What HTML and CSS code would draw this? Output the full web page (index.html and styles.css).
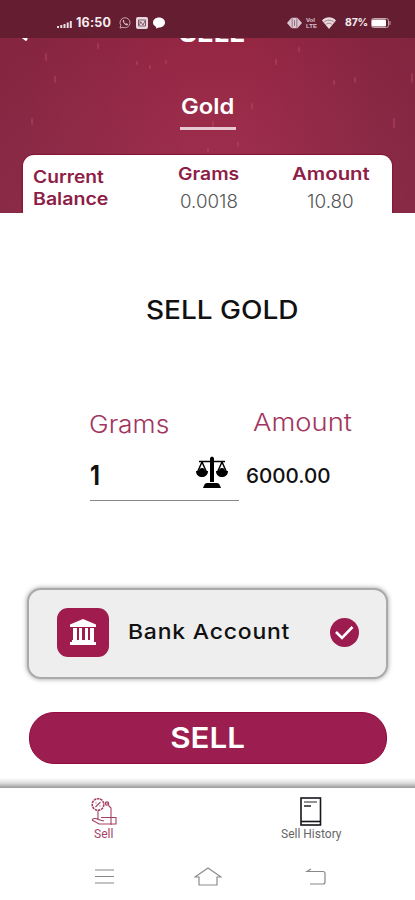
FILE: index.html
```html
<!DOCTYPE html>
<html lang="en">
<head>
<meta charset="utf-8">
<title>Sell Gold</title>
<link rel="stylesheet" href="styles.css">
</head>
<body>
<header class="hero">
  <svg class="sparkles" viewBox="0 0 415 213" aria-hidden="true">
    <g stroke="#d95b7e" stroke-width="2" stroke-linecap="round" opacity=".3">
      <path d="M46 54v6M55 77v5M98 44v4M137 62v2M150 66v2M166 61v2M299 48v3M276 60v4M334 81v3M355 78v4M252 104v4M238 143v3M208 149v2M213 122v4M394 119v8M412 74v8M32 119v5M98 5v5M46 15v5" fill="none"/>
    </g>
  </svg>
  <div class="status">
    <svg class="signal" viewBox="0 0 15 10"><path d="M1 7v2M4.3 6v3M7.500 5v4M10.700 3.500v5.500M13.800 2v7" stroke="#eadde2" stroke-width="2"/></svg>
    <span class="time">16:50</span>
    <svg class="call" viewBox="0 0 12 12"><path d="M1 11l.8-2.600A5 5 0 1 1 4 10.300z" fill="none" stroke="#c5a5b0"/><path d="M4 3c-1 2 2 5.500 4.500 5.500l.6-1.500-1.600-.8-.8.5L5 5.200l.4-.9L4.800 3z" fill="#d9c2ca"/></svg>
    <svg class="app" viewBox="0 0 12 12"><rect width="12" height="12" rx="2" fill="#e7d8de"/><path d="M2.500 3h7v6h-7zM3 8l2-3 2 3 2-4M3 5h2" stroke="#87586a" fill="none"/></svg>
    <svg class="bubble" viewBox="0 0 12 12"><path d="M6 .5c3.500 0 6 2.200 6 5s-2.500 5-6 5l-3 1 .2-1.600C1.200 9 0 7.500 0 5.500 0 2.700 2.500.5 6 .5z" fill="#fff"/></svg>
    <span class="grow"></span>
    <svg class="vibrate" viewBox="0 0 16 12"><path d="M0 6l3-3.500 2-2h6l2 2L16 6l-3 3.500-2 2H5l-2-2z" fill="#dbc7cf"/><path d="M5.500 1v10M10.500 1v10M8 3v6" stroke="#94687a"/></svg>
    <span class="volte"><span>VoI</span><span>LTE</span></span>
    <svg class="wifi" viewBox="0 0 14 12"><path d="M0 3.500C4-.7 10-.7 14 3.500L7 12z" fill="#e8dbe0"/><path d="M1.500 5.500c3-3 8-3 11 0M3.800 7.500c2-1.800 4.500-1.800 6.400 0" fill="none" stroke="#986878" stroke-width=".8"/></svg>
    <span class="percent">87%</span>
    <svg class="battery" viewBox="0 0 20 10"><rect x=".5" y=".5" width="17" height="9" rx="2" fill="none" stroke="#c4a4af"/><rect x="1" y="1.500" width="14" height="7" rx="1" fill="#fff"/><path d="M19 3v4" stroke="#c4a4af"/></svg>
  </div>
  <div class="titlebar">
    <svg class="back" viewBox="0 0 10 6"><path d="M1 0l4 3" stroke="#fff" stroke-width="3"/></svg>
    <div class="page-title">SELL</div>
  </div>
  <div class="tab"><span class="t-gold">Gold</span></div>
  <div class="balance">
    <div class="current"><div class="t-current">Current</div><div class="t-balance">Balance</div></div>
    <div class="stat grams"><div class="t-grams">Grams</div><div class="value v-grams">0.0018</div></div>
    <div class="stat amount"><div class="t-amount">Amount</div><div class="value v-amount">10.80</div></div>
  </div>
</header>
<main>
  <h1>SELL GOLD</h1>
  <div class="form">
    <div class="field">
      <div class="label l-grams">Grams</div>
      <div class="entry">
        <span class="one">1</span>
        <svg class="scales" viewBox="0 0 32 33"><path d="M14 2q2-3 4 0v24h-4zM8.500 28.500Q9 27 11 27h10q2 0 2.500 1.500L25 32H7z"/><path d="M3 5.500h26M6 6L1.500 16M6 6l4.500 10M26 6l-4.500 10M26 6l4.500 10" fill="none" stroke="#000" stroke-width="1.500"/><path d="M0 15h3q0-3 3-3t3 3h3c0 8-12 8-12 0zM20 15h3q0-3 3-3t3 3h3c0 8-12 8-12 0z"/></svg>
      </div>
    </div>
    <div class="field">
      <div class="label l-amount">Amount</div>
      <div class="total">6000.00</div>
    </div>
  </div>
  <section class="account">
    <div class="bank"><svg viewBox="0 0 26 26"><path d="M13 0L0 5.500V8h26V5.500zM3 9h4v12H3zM9 9h3v12H9zM15 9h3v12h-3zM20 9h4v12h-4zM2 21h22v2h2v3H0v-3h2z" fill="#fff"/></svg></div>
    <span class="account-name">Bank Account</span>
    <svg class="check" viewBox="0 0 29 29"><circle cx="14.500" cy="14.500" r="14.500" fill="#9d1c50"/><path d="M6 14l6 6L22.500 9" fill="none" stroke="#fff" stroke-width="2.600"/></svg>
  </section>
  <button class="sell"><span>SELL</span></button>
</main>
<nav class="tabs">
  <div class="item active">
    <svg viewBox="0 0 28 30"><g fill="none" stroke="#a64063" stroke-width="1.100"><circle cx="8" cy="7.500" r="5.800" stroke-width="1.600" stroke-dasharray="2.500 .7"/><path d="M5.500 10L10.500 5M6 5.500v1M10 8.500v1M8 13.500V22M15 6h3l1 3 2 2v17M2 22.500q3-2 6 0l6 1.500M2 23l7 4h17v-6.500H11"/><circle cx="17" cy="6.500" r="1.700"/></g></svg>
    <span>Sell</span>
  </div>
  <div class="item history">
    <svg viewBox="0 0 22 30"><rect x="1" y="1" width="19.500" height="27" fill="none" stroke="#16161b" stroke-width="1.600"/><path d="M1 24.500h20" stroke="#16161b" stroke-width="1.600"/><path d="M4 5h13" stroke="#777" stroke-width="1.600"/><path d="M4 9h7" stroke="#222" stroke-width="1.500"/></svg>
    <span>Sell History</span>
  </div>
</nav>
<footer class="system">
  <svg viewBox="0 0 28 20"><path d="M5 3h19M5 9.500h19M5 16h19" stroke="#888" stroke-width="1.200"/></svg>
  <svg viewBox="0 0 28 20"><path d="M1 10L14 1l13 9h-4v8H5v-8z" fill="none" stroke="#8b8b8b" stroke-width="1.200"/></svg>
  <svg viewBox="0 0 28 20"><path d="M13 2L9 4.500h16q2 0 2 2V15q0 2-2 2H12" fill="none" stroke="#888" stroke-width="1.200"/></svg>
</footer>
</body>
</html>
```
FILE: styles.css
```css
* { box-sizing: border-box; }
body { margin: 0; width: 415px; height: 900px; overflow: hidden; background: #fff; font-family: Inter, sans-serif; color: #111; }
svg { display: block; flex: none; }
span, .stat div, .current div, .label, .total, h1, .page-title { white-space: nowrap; }
/* Wide display lettering */
.t-gold, .stat div, .current div, .label, .total, h1, .page-title, .one, .account-name, .sell span { display: block; width: max-content; transform-origin: left center; }
.hero { position: relative; height: 213px; background: linear-gradient(90deg, rgba(111,35,60,.45), rgba(111,35,60,0) 45%, rgba(111,35,60,0) 60%, rgba(111,35,60,.5)), linear-gradient(#91243f, #9a2b49 50%, #9e3050); overflow: hidden; }
.sparkles { position: absolute; inset: 0; width: 415px; height: 213px; }
.status { position: relative; display: flex; align-items: center; height: 38px; padding: 7px 24px 0 57px; background: #651d32; color: #f5edf0; }
.signal { width: 15px; height: 10px; margin-top: 3px; }
.time { width: 37px; margin-left: 4px; font: 700 12.5px Inter; letter-spacing: .2px; }
.call { width: 12px; height: 12px; margin-left: 6px; }
.app { width: 12px; height: 12px; margin-left: 5px; }
.bubble { width: 12px; height: 12px; margin-left: 5px; }
.grow { flex: 1; }
.vibrate { width: 15px; height: 12px; }
.volte { display: grid; width: 11px; margin-left: 4px; font: 700 6px/6px "Liberation Sans"; color: #dbc7cf; }
.wifi { width: 14px; height: 12px; margin-left: 5px; }
.percent { width: 22px; margin-left: 9px; font: 700 10.5px Inter; letter-spacing: -.2px; }
.battery { width: 20px; height: 10px; margin-left: 4px; }
.titlebar { position: relative; display: flex; height: 5px; overflow: hidden; align-items: flex-end; }
.back { width: 10px; height: 6px; margin-left: 22px; }
.page-title { margin-left: 147px; font-size: 27px; font-weight: 700; line-height: 19px; color: #fff; margin-bottom: 1px; height: 19px; transform: scaleX(1.02); }
.tab { position: relative; width: 56px; height: 87px; margin: 0 auto; padding: 47px 0 0 1px; border-bottom: 3px solid #e8c9d3; color: #fff; font-size: 22px; font-weight: 600; line-height: 32px; }
.t-gold { transform: scaleX(1.08); }
.balance { position: relative; display: grid; grid-template-columns: 145px 114px 1fr; width: 369px; height: 58px; margin: 25px 0 0 23px; padding: 9px 0 0 10px; background: #fff; border-radius: 11px 11px 0 0; box-shadow: 0 0 1px 1px #87133b; color: #8e1d47; font-size: 17px; font-weight: 600; }
.current { padding-top: 2px; line-height: 22px; }
.t-current { transform: scaleX(1.13); }
.t-balance { transform: scaleX(1.15); }
.stat div { line-height: 20px; }
.t-grams { transform: scaleX(1.14); }
.t-amount { transform: scaleX(1.2); }
.stat .value { margin-top: 8px; font-weight: 300; font-size: 18px; color: #555; }
.v-grams { margin-left: 2px; transform: scaleX(1.04); }
.v-amount { margin-left: 15px; transform: scaleX(1.05); }
main { height: 575px; overflow: hidden; background: linear-gradient(#fff0 565px, #ddd 570px, #999 575px); }
h1 { margin: 81px 0 0 146px; font-size: 25px; line-height: 32px; font-weight: 500; transform: scaleX(1.12); }
.form { display: grid; grid-template-columns: 149px 1fr; column-gap: 7px; margin: 82px 0 0 90px; height: 94px; }
.label { font-size: 24px; font-weight: 300; line-height: 30px; color: #a23560; }
.l-grams { padding-top: 2px; margin-left: -1px; transform: scaleX(1.1); }
.l-amount { margin-left: 7px; transform: scaleX(1.14); }
.entry { display: flex; justify-content: space-between; height: 61px; padding: 12px 11px 0 0; border-bottom: 1px solid #888; }
.one { margin-top: 4px; font-size: 27px; font-weight: 700; line-height: 39px; transform: scaleX(.85); }
.scales { width: 32px; height: 33px; margin-top: 4px; }
.total { padding-top: 13px; font-size: 20px; font-weight: 500; line-height: 51px; transform: scaleX(1.03); }
.account { display: flex; align-items: center; width: 361px; height: 91px; margin: 86px 0 0 27px; padding: 0 27px 3px 28px; border: 2px solid #aaa; border-radius: 14px; background: #eee; box-shadow: 0 0 5px #999; }
.bank { display: grid; place-items: center; width: 52px; height: 49px; border-radius: 11px; background: #a01c4e; }
.bank svg { width: 26px; height: 26px; }
.account-name { margin: 0 auto 0 19px; font-size: 20.5px; font-weight: 500; line-height: 28px; letter-spacing: .7px; transform: scaleX(1.12); }
.check { width: 29px; height: 29px; }
.sell { display: grid; place-items: center; width: 358px; height: 52px; margin: 33px 0 0 29px; padding: 0; border: 1px solid #920b3d; border-radius: 25px; background: #9c1d4f; color: #fff; font: 600 29px/50px Inter; }
.sell span { transform: scaleX(1.08); transform-origin: center; }
.tabs { display: flex; height: 64px; background: #fff; font: 12px/15px Roboto, sans-serif; }
.item { width: 50%; padding-top: 9px; display: grid; justify-items: center; align-content: start; color: #666; }
.item svg { height: 30px; }
.active { color: #a54368; }
.system { display: grid; grid-template-columns: repeat(3, 28px); column-gap: 76px; padding: 15px 0 0 90px; }
.system svg { width: 28px; height: 20px; }
```
